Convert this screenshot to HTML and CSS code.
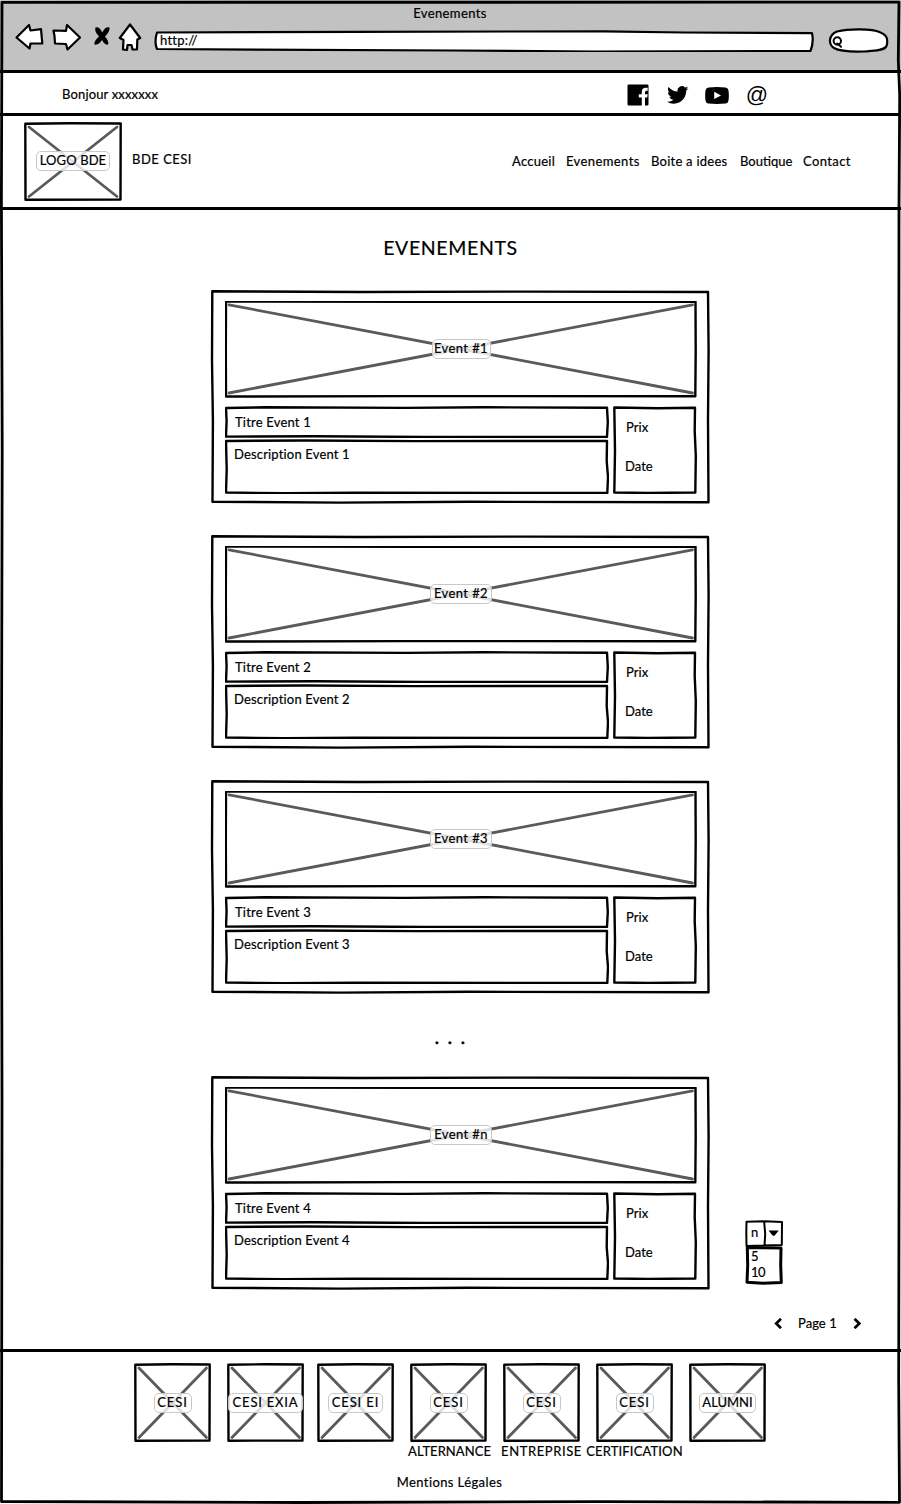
FILE: index.html
```
<!DOCTYPE html>
<html lang="fr">
<head>
<meta charset="utf-8">
<title>Evenements</title>
<link rel="stylesheet" href="styles.css">
</head>
<body>
<svg class="defs" width="0" height="0">
  <symbol id="card-frame" viewBox="0 0 500 214"><path class="ink" d="M2.300 1.300L150 2 320 1.600 498 2 498.600 60 498 130 498.500 212.300 260 211.800 130 212.600 2.500 211.700 2.900 130 2 70Z"/></symbol>
  <symbol id="photo-frame" viewBox="0 0 472 97"><path class="ink" d="M1 0.500L200 0.900 470.500 0.700 470.700 50 470.300 95.300 180 95.100 1 95.500 0.800 50Z"/><path class="cross" d="M4 3.800L467.500 92M467.500 3.800L4 92"/></symbol>
  <symbol id="title-frame" viewBox="0 0 384 32"><path class="ink" d="M1 2L40 1.300 180 1.900 260 1.300 382 1.700 382.800 16 382 31 200 31 90 30.300 1 30.600 1.600 15Z"/></symbol>
  <symbol id="desc-frame" viewBox="0 0 384 55"><path class="ink" d="M1 2L80 1.500 190 2.100 382 2 381.700 22 383 38 382.300 54 130 53.800 60 54.200 1 53.500 1.700 30Z"/></symbol>
  <symbol id="side-frame" viewBox="0 0 84 88"><path class="ink" d="M1.300 1.500L45 2.200 82 1.800 81.700 25 82.800 50 82.300 86.500 35 87 1.300 86.500 2 45Z"/></symbol>
  <symbol id="tile-frame" viewBox="0 0 77 79"><path class="ink" d="M1.300 1.700L38 1.300 75.700 1.500 75.500 77.600 1.500 77.700Z"/><path class="cross" d="M5 5L72.500 74.500M72.500 5L5 74.500"/></symbol>
</svg>
<div class="window">
  <svg class="frame" viewBox="0 0 901 1504"><path class="ink-bold" d="M2 2.300L899 2.200 898.300 60 899.700 95 899 210 898.600 700 899.200 1100 898.700 1380 899.500 1502.300 600 1501.700 300 1502.500 1.500 1501.500 2 1100 1.400 800 2.200 450 1.400 200Z"/></svg>

  <header class="chrome">
    <div class="chrome-title">Evenements</div>
    <div class="chrome-bar">
      <svg class="tools" viewBox="0 0 130 30">
        <g class="tool">
          <path d="M2.500 14.500L15 2 16.500 7.500 27 6.200 28.300 20.500 16.500 20.500 15.500 25.500Z"/>
          <path d="M39.500 7.500L52 7.800 53 2 66 14.500 53.500 26.500 52 21 41 20.500 40.500 13Z"/>
          <path d="M116 1.500L126.200 15 123.300 16.500 123 26.500 118.500 26.500 117.500 22 113.500 22 113 27 109 26.500 109.500 17 105.800 15Z"/>
        </g>
        <path class="stop" d="M81.500 4.500Q85.500 3.500 88.300 9.500Q91 3.500 95.500 4.500Q96.300 8 91 13.500Q95.500 19 94 21.500Q91 22.500 88 17Q84.500 22.500 80.500 21.500Q79.500 18.500 85 13.500Q80 8 81.500 4.500Z"/>
      </svg>
      <div class="url">
        <svg class="frame" viewBox="0 0 660 22"><path class="field" d="M3 2.500L200 1.800 450 1.300 530 2.500 658 3.200Q660 12 656.500 21L440 21.500 300 20.500 100 19.600 3 19Q0 12 3 2.500Z"/></svg>
        <span class="address">http://</span>
      </div>
      <svg class="search" viewBox="0 0 61 25"><path class="field" d="M9 3.500C20 .8 44 .5 52 4.200C59 7 60 11 58.800 17C58 23 44 23 36 23.500C26 23.800 12 23.500 6 20C0 16 .5 7 9 3.500Z"/><circle class="lens" cx="9.300" cy="13" r="3.700"/><path class="lens" d="M9.300 15.500L13 18.800"/></svg>
    </div>
  </header>

  <div class="topbar">
    <span class="hello">Bonjour xxxxxxx</span>
    <div class="social">
      <svg class="fb" viewBox="0 0 22 22"><path fill-rule="evenodd" d="M1.700.500H20.300Q21.500.500 21.500 1.700V20.300Q21.500 21.500 20.300 21.500H18V13.400H20.200L20.700 10.200H18V8.200Q18 6.700 19.300 6.700H20.700V3.800Q20 3.700 18.900 3.700Q14.800 3.700 14.800 7.900V10.200H11.800V13.400H14.800V21.500H1.700Q.5 21.500.5 20.300V1.700Q.5.500 1.700.500Z"/></svg>
      <svg class="tw" viewBox="0 0 24 20"><path d="M23.600 2.400c-.9.400-1.800.600-2.800.8 1-.6 1.800-1.600 2.100-2.700-.9.600-2 1-3.100 1.200a4.900 4.900 0 0 0-8.300 4.400C7.500 5.900 3.900 4 1.500 1 .2 3.200.8 6.100 3 7.600c-.8 0-1.600-.3-2.200-.6 0 2.300 1.600 4.300 3.900 4.900-.7.200-1.500.2-2.200.1.600 1.900 2.400 3.300 4.500 3.400-2.100 1.600-4.600 2.300-7.200 2 2.200 1.400 4.700 2.200 7.500 2.200 9 0 14.100-7.600 13.800-14.600 1-.700 1.800-1.500 2.500-2.600z"/></svg>
      <svg class="yt" viewBox="0 0 24 17"><path fill-rule="evenodd" d="M3.500.5Q12-.4 20.500.5Q23.200.8 23.500 3.500Q24.200 8.500 23.500 13.500Q23.200 16.200 20.500 16.500Q12 17.400 3.500 16.500Q.8 16.200.5 13.500Q-.2 8.500.5 3.500Q.8.800 3.500.500ZM9.200 4.800V12L16 8.400Z"/></svg>
      <span class="at">@</span>
    </div>
  </div>

  <div class="masthead">
    <div class="logo"><svg class="frame" viewBox="0 0 98 79"><path class="ink" d="M1.300 1.700L45 1.300 96.700 1.500 96.500 77.600 1.500 77.700Z"/><path class="cross" d="M5 5L93 74.500M93 5L5 74.500"/></svg><span class="tag w-logo">LOGO BDE</span></div>
    <span class="brand">BDE CESI</span>
    <nav class="nav"><a class="n1">Accueil</a><a class="n2">Evenements</a><a class="n3">Boite a idees</a><a class="n4">Boutique</a><a class="n5">Contact</a></nav>
  </div>

  <main class="main">
    <h1>EVENEMENTS</h1>
    <article class="card">
      <svg class="frame"><use href="#card-frame"/></svg>
      <div class="photo"><svg class="frame"><use href="#photo-frame"/></svg><span class="tag">Event #1</span></div>
      <div class="title"><svg class="frame"><use href="#title-frame"/></svg><span>Titre Event 1</span></div>
      <div class="desc"><svg class="frame"><use href="#desc-frame"/></svg><span>Description Event 1</span></div>
      <div class="side"><svg class="frame"><use href="#side-frame"/></svg><span class="prix">Prix</span><span>Date</span></div>
    </article>
    <article class="card">
      <svg class="frame"><use href="#card-frame"/></svg>
      <div class="photo"><svg class="frame"><use href="#photo-frame"/></svg><span class="tag wide">Event #2</span></div>
      <div class="title"><svg class="frame"><use href="#title-frame"/></svg><span>Titre Event 2</span></div>
      <div class="desc"><svg class="frame"><use href="#desc-frame"/></svg><span>Description Event 2</span></div>
      <div class="side"><svg class="frame"><use href="#side-frame"/></svg><span class="prix">Prix</span><span>Date</span></div>
    </article>
    <article class="card">
      <svg class="frame"><use href="#card-frame"/></svg>
      <div class="photo"><svg class="frame"><use href="#photo-frame"/></svg><span class="tag wide">Event #3</span></div>
      <div class="title"><svg class="frame"><use href="#title-frame"/></svg><span>Titre Event 3</span></div>
      <div class="desc"><svg class="frame"><use href="#desc-frame"/></svg><span>Description Event 3</span></div>
      <div class="side"><svg class="frame"><use href="#side-frame"/></svg><span class="prix">Prix</span><span>Date</span></div>
    </article>
    <div class="more">...</div>
    <div class="last-row">
      <article class="card">
        <svg class="frame"><use href="#card-frame"/></svg>
        <div class="photo"><svg class="frame"><use href="#photo-frame"/></svg><span class="tag wide">Event #n</span></div>
        <div class="title"><svg class="frame"><use href="#title-frame"/></svg><span>Titre Event 4</span></div>
        <div class="desc"><svg class="frame"><use href="#desc-frame"/></svg><span>Description Event 4</span></div>
        <div class="side"><svg class="frame"><use href="#side-frame"/></svg><span class="prix">Prix</span><span>Date</span></div>
      </article>
      <div class="select">
        <svg class="frame" viewBox="0 0 39 65"><path class="ink thin" d="M1.500 1.800L20 1.300 37 2 36.800 25 1.500 26 1.300 12ZM19.200 2L20.200 14 19.500 26"/><path class="ink thick" d="M2.300 27.500L36 28 35.700 45 36.300 62.500 18 63.300 2 62.300 2.700 45Z"/><path d="M23.500 10.500H33.800L29.500 15.700H27.800Z"/></svg>
        <span class="current">n</span><span>5</span><span>10</span>
      </div>
    </div>
    <div class="pager">
      <svg viewBox="0 0 8 11"><path d="M7 .8L2.200 5.500 7 10.200"/></svg>
      <span>Page 1</span>
      <svg viewBox="0 0 8 11"><path d="M1.500 .8L6.300 5.500 1.500 10.200"/></svg>
    </div>
  </main>

  <footer class="footer">
    <div class="tiles">
      <div class="tile"><div class="pic"><svg class="frame"><use href="#tile-frame"/></svg><span class="tag w-cesi">CESI</span></div></div>
      <div class="tile"><div class="pic"><svg class="frame"><use href="#tile-frame"/></svg><span class="tag w-exia">CESI EXIA</span></div></div>
      <div class="tile ei"><div class="pic"><svg class="frame"><use href="#tile-frame"/></svg><span class="tag w-ei">CESI EI</span></div></div>
      <div class="tile"><div class="pic"><svg class="frame"><use href="#tile-frame"/></svg><span class="tag w-cesi">CESI</span></div><span class="cap c1">ALTERNANCE</span></div>
      <div class="tile"><div class="pic"><svg class="frame"><use href="#tile-frame"/></svg><span class="tag w-cesi">CESI</span></div><span class="cap c2">ENTREPRISE</span></div>
      <div class="tile"><div class="pic"><svg class="frame"><use href="#tile-frame"/></svg><span class="tag w-cesi">CESI</span></div><span class="cap c3">CERTIFICATION</span></div>
      <div class="tile"><div class="pic"><svg class="frame"><use href="#tile-frame"/></svg><span class="tag w-alumni">ALUMNI</span></div></div>
    </div>
    <div class="legal">Mentions Légales</div>
  </footer>
</div>
</body>
</html>
```
FILE: styles.css
```
* { box-sizing: border-box; }
body { margin: 0; background: #fff; color: #000; font: 400 13px/16px Lato, "Open Sans", sans-serif; letter-spacing: .25px; -webkit-text-stroke: .2px #000; }
.defs { position: absolute; }
svg { display: block; flex: none; }
span, a { white-space: nowrap; }
.window { position: relative; width: 901px; height: 1504px; overflow: hidden; display: flex; flex-direction: column; }
.frame { position: absolute; left: 0; top: 0; width: 100%; height: 100%; pointer-events: none; }
.frame + * { position: relative; }
.ink, .ink-bold { fill: none; stroke: #000; stroke-width: 2.400; stroke-linejoin: round; }
.ink-bold { stroke-width: 2.800; }
.ink.thin { stroke-width: 2; }
.ink.thick { stroke-width: 3; }
.cross { fill: none; stroke: #5a5a5a; stroke-width: 2.800; stroke-linecap: round; }
.field { fill: #fff; stroke: #000; stroke-width: 2.200; stroke-linejoin: round; }
#photo-frame { overflow: visible; }

.window > .frame { z-index: 1; }
.window > .chrome { height: 73px; padding: 5px 12px 0 14px; background: #c2c2c2; border-bottom: 3px solid #000; }
.chrome-title { padding-right: 3px; text-align: center; letter-spacing: .4px; }
.chrome-bar { display: flex; align-items: flex-start; padding-top: 2px; }
.tools { width: 130px; height: 30px; }
.tool path { fill: #fff; stroke: #000; stroke-width: 2.200; stroke-linejoin: round; }
.stop { fill: #000; }
.url { position: relative; width: 660px; height: 22px; margin: 7px 0 0 10px; padding: 2px 0 0 6px; }
.search { width: 61px; height: 25px; margin: 5px 0 0 14px; }
.lens { fill: none; stroke: #000; stroke-width: 2; stroke-linecap: round; }

.topbar { height: 43px; padding: 0 133px 0 62px; display: flex; align-items: center; justify-content: space-between; border-bottom: 3px solid #000; }
.hello { padding-top: 2px; letter-spacing: .15px; }
.social { display: flex; align-items: center; padding-top: 4px; }
.fb { width: 22px; height: 22px; margin-right: 18px; }
.tw { width: 22px; height: 18px; margin-right: 16px; }
.yt { width: 24px; height: 17px; margin-right: 17px; }
.at { font: 22px/22px "Liberation Sans", Arial, sans-serif; letter-spacing: 0; -webkit-text-stroke: 0; }

.masthead { height: 94px; padding: 6px 50px 0 24px; display: flex; border-bottom: 3px solid #000; }
.logo, .photo, .pic { position: relative; display: flex; align-items: center; justify-content: center; }
.logo { width: 98px; height: 79px; }
.brand { margin: 29px 0 0 10px; letter-spacing: .5px; }
.nav { display: flex; gap: 12px; margin: 31px 0 0 auto; }
.n1 { width: 42px; }
.n2 { width: 73px; letter-spacing: .4px; }
.n3 { width: 77px; }
.n4 { width: 51px; letter-spacing: 0; }
.n5 { width: 48px; letter-spacing: .4px; }
.tag { height: 20px; min-width: 59px; padding: 0; text-align: center; line-height: 16px; border: 1px solid #c8c8c8; border-radius: 5px; background: rgba(255,255,255,.8); letter-spacing: .4px; }
.tag.wide { min-width: 62px; }
.tag.w-logo { min-width: 74px; letter-spacing: .1px; }
.tag.w-cesi { min-width: 38px; letter-spacing: .9px; }
.tag.w-exia { min-width: 75px; letter-spacing: .8px; }
.tag.w-ei { min-width: 55px; letter-spacing: .9px; }
.tag.w-alumni { min-width: 57px; letter-spacing: 0; }

.main { flex: none; height: 1142px; padding: 24px 0 0; border-bottom: 3px solid #000; }
h1 { margin: 0 0 28px; text-align: center; font-size: 19.500px; line-height: 28px; font-weight: 400; letter-spacing: .65px; }
.card { position: relative; width: 500px; height: 214px; margin: 0 0 31px 210px; padding: 11px 13px 0 15px; display: grid; grid-template: 105px 33px 55px / 384px 84px; column-gap: 4px; }
.photo { grid-column: 1 / 3; height: 97px; padding-bottom: 2px; }
.title { position: relative; height: 32px; padding: 8px 0 0 10px; letter-spacing: .2px; }
.desc { grid-column: 1; position: relative; height: 55px; padding: 7px 0 0 9px; letter-spacing: .17px; }
.side { grid-column: 2; grid-row: 2 / 4; position: relative; height: 88px; padding: 13px 0 0 12px; display: flex; flex-direction: column; gap: 23px; letter-spacing: .05px; }
.prix { padding-left: 1px; }
.more { height: 51px; padding: 10px 0 0 7px; text-align: center; font-size: 20px; line-height: 2px; letter-spacing: 8.300px; -webkit-text-stroke-width: .5px; }
.last-row { display: flex; align-items: flex-start; }
.last-row .card { margin-bottom: 0; }
.select { position: relative; width: 39px; height: 65px; margin: 144px 0 0 35px; padding: 4px 0 0 6px; display: flex; flex-direction: column; }
.select span { letter-spacing: -.5px; }
.current { margin-bottom: 8px; }
.pager { display: flex; align-items: center; margin: 25px 0 0 774px; letter-spacing: .05px; }
.pager span { width: 40px; margin: 0 15px 0 16px; }
.pager svg { width: 8px; height: 11px; }
.pager path { fill: none; stroke: #000; stroke-width: 2.700; }

.footer { flex: 1; padding-top: 11px; }
.tiles { display: flex; gap: 16px; padding-left: 134px; height: 111px; }
.tile { width: 77px; display: flex; flex-direction: column; align-items: center; }
.tile.ei { margin-left: -3px; }
.pic { width: 77px; height: 79px; }
.pic .tag { top: .5px; }
.logo .tag { top: -.5px; }
.cap { padding-top: 1px; }
.c1 { padding-left: 2px; letter-spacing: .05px; }
.c2 { letter-spacing: .6px; }
.c3 { letter-spacing: .15px; }
.legal { padding-right: 2px; text-align: center; letter-spacing: .4px; }
```
